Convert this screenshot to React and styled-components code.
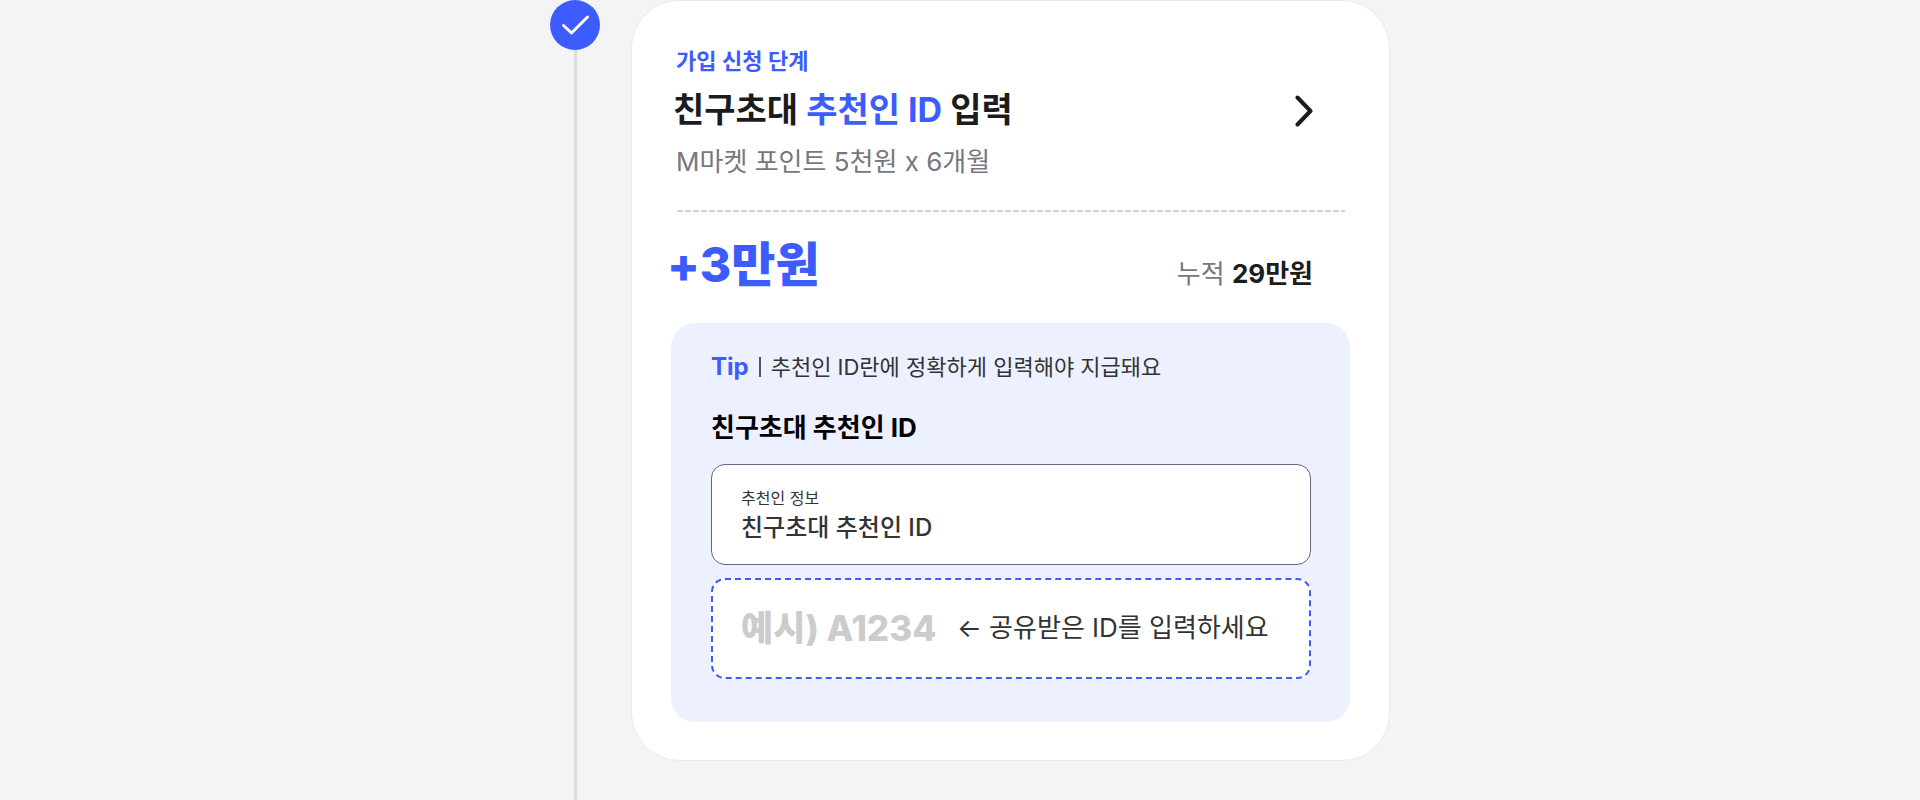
import React from "react";
import styled, { createGlobalStyle } from "styled-components";

const GlobalStyle = createGlobalStyle`
    * {
        box-sizing: border-box;
    }

    body {
        margin: 0;
        background-color: #f4f4f7;
        color: #1c1c1c;
        font-family: Inter, "Noto Sans CJK KR", sans-serif;
    }
`;

const Container = styled.main`
    display: flex;
    max-width: 860px;
    min-height: 100vh;
    margin: 0 auto;
    padding-left: 20px;
`;

const Rail = styled.div`
    flex: none;
    width: 50px;
    display: flex;
    flex-direction: column;
    align-items: center;
`;

const Badge = styled.div`
    width: 50px;
    height: 50px;
    border-radius: 50%;
    background-color: #3c5cff;
    display: flex;
    align-items: center;
    justify-content: center;
`;

const Line = styled.div`
    flex: 1;
    width: 3px;
    background-color: #dddddd;
`;

const Card = styled.section`
    flex: 1;
    align-self: flex-start;
    margin-left: 31px;
    padding: 44px 39px 38px;
    border: 1px solid #e9eaed;
    border-radius: 48px;
    background-color: white;
`;

const Header = styled.header`
    display: flex;
    align-items: center;
    justify-content: space-between;
    padding: 0 37px 0 5px;
`;

const Step = styled.p`
    margin: 0;
    font-size: 22px;
    line-height: 32px;
    font-weight: 600;
    color: #3c5cff;
`;

const Title = styled.h2`
    margin: 9px 0 10px -3px;
    font-size: 34px;
    line-height: 48px;
    font-weight: 700;
`;

const Accent = styled.span`
    color: #3c5cff;
`;

const Benefit = styled.p`
    margin: 0;
    font-size: 26px;
    line-height: 36px;
    color: #77777d;
`;

const MoreButton = styled.button`
    display: flex;
    padding: 0 0 4px;
    border: none;
    background: none;
    color: #1c1c1c;
    cursor: pointer;
`;

const Divider = styled.hr`
    height: 2px;
    margin: 30px 5px 23px 6px;
    border: none;
    background: repeating-linear-gradient(to right, #d3d3d3 0 6px, transparent 6px 8px);
`;

const Summary = styled.div`
    display: flex;
    align-items: center;
    justify-content: space-between;
    padding-right: 37px;
`;

const Amount = styled.strong`
    margin-left: -4px;
    font-size: 48px;
    line-height: 60px;
    font-weight: 800;
    color: #3c5cff;
`;

const Total = styled.p`
    margin: 18px 0 0;
    font-size: 26px;
    line-height: 36px;
    color: #77777d;

    b {
        font-weight: 700;
        color: #1c1c1c;
    }
`;

const TipBox = styled.div`
    margin-top: 28px;
    padding: 28px 39px 43px 40px;
    border-radius: 24px;
    background-color: #edf0ff;
`;

const Tip = styled.p`
    display: flex;
    align-items: center;
    gap: 10px;
    margin: 0;
    font-size: 22px;
    line-height: 32px;
    color: #333333;

    b {
        font-size: 24px;
        font-weight: 700;
        color: #3c5cff;
    }
`;

const Bar = styled.span`
    width: 2px;
    height: 20px;
    background-color: #555555;
`;

const FormTitle = styled.h3`
    margin: 27px 0 18px;
    font-size: 26px;
    line-height: 36px;
    font-weight: 700;
    color: black;
`;

const Field = styled.div`
    display: flex;
    flex-direction: ${(props) => (props.$row ? "row" : "column")};
    align-items: ${(props) => (props.$row ? "center" : "stretch")};
    justify-content: ${(props) => (props.$row ? "flex-start" : "center")};
    gap: ${(props) => (props.$row ? "16px" : "0")};
    height: 101px;
    padding: ${(props) => (props.$row ? "0 28px 2px" : "0 29px 2px")};
    border: ${(props) => (props.$row ? "2px dashed #3c5cff" : "1px solid #5f6783")};
    border-radius: 14px;
    background-color: white;

    & + & {
        margin-top: 13px;
    }
`;

const Label = styled.label`
    font-size: ${(props) => (props.$large ? "26px" : "16px")};
    line-height: ${(props) => (props.$large ? "36px" : "24px")};
    color: #333333;
    white-space: nowrap;
`;

const Input = styled.input`
    width: ${(props) => props.$width || "100%"};
    height: ${(props) => (props.$large ? "48px" : "32px")};
    padding: 0;
    border: none;
    outline: none;
    background: none;
    font-family: inherit;
    font-size: ${(props) => (props.$large ? "35px" : "24px")};
    font-weight: ${(props) => (props.$large ? 800 : 500)};
    color: #333333;

    &::placeholder {
        color: #cccccc;
        opacity: 1;
    }
`;

const App = () => {
  return (
    <>
        <GlobalStyle />
        <Container>
            <Rail>
                <Badge>
                    <svg width="50" height="50" viewBox="0 0 50 50" fill="none" stroke="white" strokeWidth="3" strokeLinecap="round" strokeLinejoin="round">
                        <path d="M13.5 25.5L21.5 33L37.5 17" />
                    </svg>
                </Badge>
                <Line />
            </Rail>
            <Card>
                <Header>
                    <div>
                        <Step>가입 신청 단계</Step>
                        <Title>친구초대 <Accent>추천인 ID</Accent> 입력</Title>
                        <Benefit>M마켓 포인트 5천원 x 6개월</Benefit>
                    </div>
                    <MoreButton aria-label="자세히 보기">
                        <svg width="18" height="32" viewBox="0 0 18 32" fill="none" stroke="currentColor" strokeWidth="4" strokeLinecap="round" strokeLinejoin="round">
                            <path d="M2.5 2.5L15.5 16L2.5 29.5" />
                        </svg>
                    </MoreButton>
                </Header>
                <Divider />
                <Summary>
                    <Amount>+3만원</Amount>
                    <Total>누적 <b>29만원</b></Total>
                </Summary>
                <TipBox>
                    <Tip>
                        <b>Tip</b>
                        <Bar />
                        추천인 ID란에 정확하게 입력해야 지급돼요
                    </Tip>
                    <FormTitle>친구초대 추천인 ID</FormTitle>
                    <Field>
                        <Label htmlFor="referrer-type">추천인 정보</Label>
                        <Input id="referrer-type" defaultValue="친구초대 추천인 ID" readOnly />
                    </Field>
                    <Field $row>
                        <Input id="referrer-id" $large $width="200px" placeholder="예시) A1234" />
                        <Label htmlFor="referrer-id" $large>← 공유받은 ID를 입력하세요</Label>
                    </Field>
                </TipBox>
            </Card>
        </Container>
    </>
  )
}

export default App
